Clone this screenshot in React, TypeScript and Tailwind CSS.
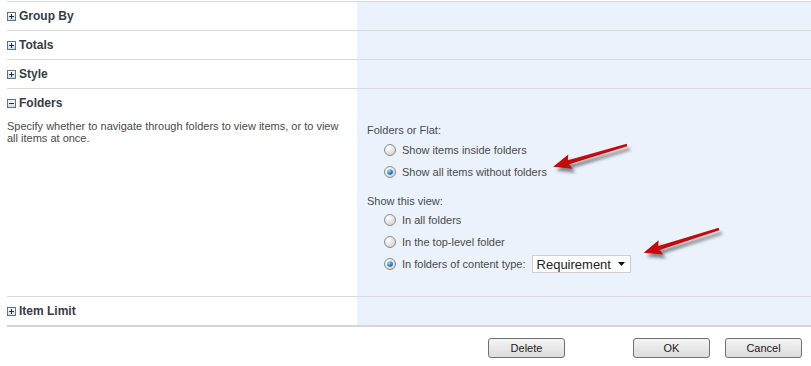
import React from "react";

function BoxIcon({ minus = false }: { minus?: boolean }) {
  return (
    <svg width="9" height="9" viewBox="0 0 9 9" className="shrink-0">
      <defs>
        <linearGradient id={minus ? "gm" : "gp"} x1="0" y1="0" x2="0" y2="1">
          <stop offset="0" stopColor="#ffffff" />
          <stop offset="1" stopColor="#cfd9e5" />
        </linearGradient>
      </defs>
      <rect x="0.5" y="0.5" width="8" height="8" fill={`url(#${minus ? "gm" : "gp"})`} stroke="#5f7189" />
      <rect x="2" y="4" width="5" height="1" fill="#1f2d3d" />
      {!minus && <rect x="4" y="2" width="1" height="5" fill="#1f2d3d" />}
    </svg>
  );
}

function Heading({ label, minus = false }: { label: string; minus?: boolean }) {
  return (
    <div className="h-[28px] flex items-center gap-[3px]">
      <BoxIcon minus={minus} />
      <span className="text-[12px] font-bold text-[#363c44] leading-none">{label}</span>
    </div>
  );
}

function Radio({ checked = false }: { checked?: boolean }) {
  return (
    <svg width="12" height="12" viewBox="0 0 12 12" className="shrink-0">
      <defs>
        <radialGradient id="rbg" cx="0.35" cy="0.3" r="0.8">
          <stop offset="0" stopColor="#ffffff" />
          <stop offset="1" stopColor="#cfcfcf" />
        </radialGradient>
        <radialGradient id="rdot" cx="0.35" cy="0.3" r="0.8">
          <stop offset="0" stopColor="#9fd8f5" />
          <stop offset="0.6" stopColor="#2a8ad0" />
          <stop offset="1" stopColor="#0b3f74" />
        </radialGradient>
      </defs>
      <circle cx="6" cy="6" r="5.5" fill="url(#rbg)" stroke="#8c8c8c" />
      {checked && <circle cx="6" cy="6" r="2.8" fill="url(#rdot)" />}
    </svg>
  );
}

function RadioRow({ label, checked = false, children }: { label: string; checked?: boolean; children?: React.ReactNode }) {
  return (
    <div className="h-[22px] flex items-center pl-[17px] gap-[6px]">
      <Radio checked={checked} />
      <span className="text-[11px] text-[#4a4a4a] leading-none">{label}</span>
      {children}
    </div>
  );
}

function Row({ label }: { label: string }) {
  return (
    <div className="flex border-t border-[#d9d9d9]">
      <div className="w-[350px]">
        <Heading label={label} />
      </div>
      <div className="flex-1 bg-[#ebf2fc]" />
    </div>
  );
}

function Btn({ label, className = "" }: { label: string; className?: string }) {
  return (
    <div
      className={`w-[77px] h-[20px] flex items-center justify-center rounded-[3px] border border-[#707070] bg-gradient-to-b from-[#f4f4f4] to-[#dcdcdc] text-[11px] text-[#1a1a1a] ${className}`}
    >
      {label}
    </div>
  );
}

function Arrow({ x, y, angle, len }: { x: number; y: number; angle: number; len: number }) {
  const L = len;
  const pts = `0,-1.2 ${L - 16},-2.1 ${L - 18},-7.5 ${L},0 ${L - 18},7.5 ${L - 16},2.1 0,1.2`;
  return (
    <g>
      <g transform={`translate(${x + 3},${y + 4}) rotate(${angle})`} filter="url(#blur)">
        <polygon points={pts} fill="#303030" opacity="0.55" />
      </g>
      <g transform={`translate(${x},${y}) rotate(${angle})`}>
        <polygon points={pts} fill="#c40a0a" />
      </g>
    </g>
  );
}

export default function App() {
  return (
    <div className="relative w-[811px] h-[366px] bg-white overflow-hidden font-['Liberation_Sans',Arial,sans-serif]">
      <div className="pt-[1px] pl-[7px]">
        <Row label="Group By" />
        <Row label="Totals" />
        <Row label="Style" />
        <div className="flex border-t border-[#d9d9d9] h-[208px]">
          <div className="w-[350px]">
            <Heading label="Folders" minus />
            <p className="mt-[3px] text-[11px] leading-[12px] text-[#4a4a4a] pr-[6px]">
              Specify whether to navigate through folders to view items, or to view all items at once.
            </p>
          </div>
          <div className="flex-1 bg-[#ebf2fc] pt-[35px] pl-[10px]">
            <div className="h-[13px] text-[11px] leading-[13px] text-[#4a4a4a]">Folders or Flat:</div>
            <div className="mt-[2px]">
              <RadioRow label="Show items inside folders" />
              <RadioRow label="Show all items without folders" checked />
            </div>
            <div className="mt-[12px] h-[13px] text-[11px] leading-[13px] text-[#4a4a4a]">Show this view:</div>
            <div className="mt-[1px]">
              <RadioRow label="In all folders" />
              <RadioRow label="In the top-level folder" />
              <RadioRow label="In folders of content type:" checked>
                <div className="w-[99px] h-[18px] bg-white border border-[#cfcfcf] flex items-center justify-between pl-[4px] pr-[5px]">
                  <span className="text-[13px] text-[#222] leading-none">Requirement</span>
                  <svg width="7" height="4" viewBox="0 0 7 4">
                    <polygon points="0,0 7,0 3.5,4" fill="#111" />
                  </svg>
                </div>
              </RadioRow>
            </div>
          </div>
        </div>
        <div className="flex border-t border-[#d9d9d9] border-b-2 border-b-[#d6d6d6]">
          <div className="w-[350px]">
            <Heading label="Item Limit" />
          </div>
          <div className="flex-1 bg-[#ebf2fc]" />
        </div>
      </div>
      <div className="flex mt-[11px]">
        <Btn label="Delete" className="ml-[488px]" />
        <Btn label="OK" className="ml-[68px]" />
        <Btn label="Cancel" className="ml-[15px]" />
      </div>
      <svg className="absolute inset-0 pointer-events-none" width="811" height="366">
        <defs>
          <filter id="blur" x="-20%" y="-50%" width="140%" height="200%">
            <feGaussianBlur stdDeviation="1.5" />
          </filter>
        </defs>
        <Arrow x={627} y={145} angle={163.6} len={77} />
        <Arrow x={719} y={229} angle={162.5} len={79} />
      </svg>
    </div>
  );
}
